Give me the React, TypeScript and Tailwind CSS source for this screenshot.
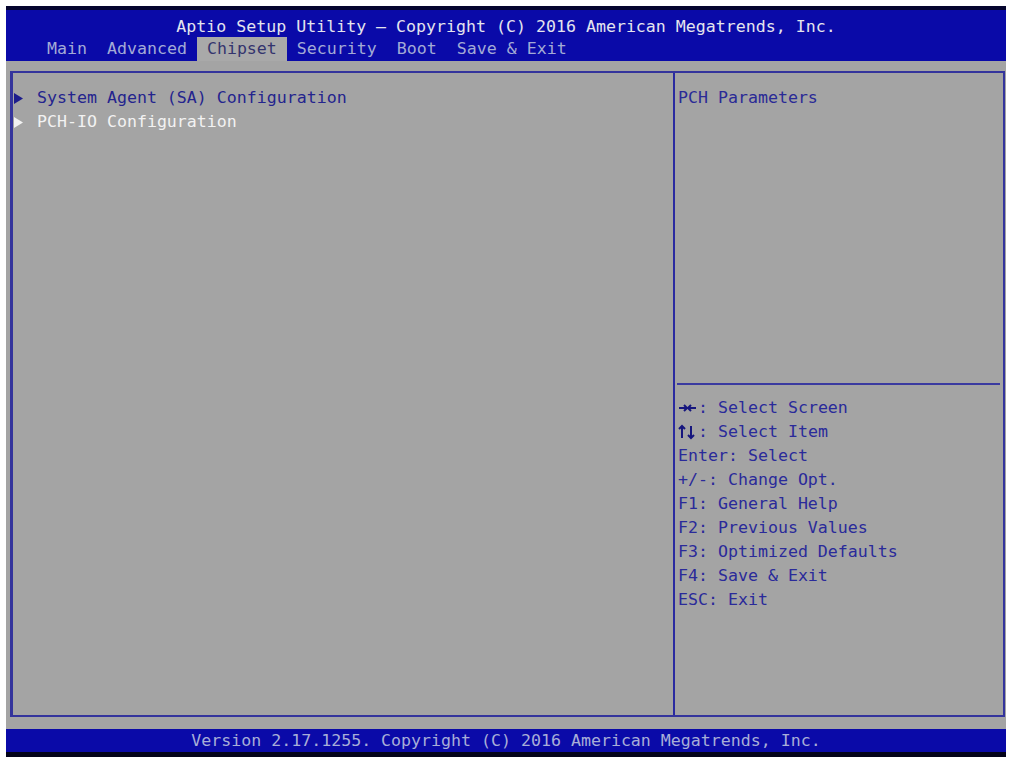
const tabs = ["Main", "Advanced", "Chipset", "Security", "Boot", "Save & Exit"];

const items = [
  { label: "System Agent (SA) Configuration", selected: false },
  { label: "PCH-IO Configuration", selected: true },
];

const help: [string, string][] = [
  ["lr", ": Select Screen"],
  ["ud", ": Select Item"],
  ["", "Enter: Select"],
  ["", "+/-: Change Opt."],
  ["", "F1: General Help"],
  ["", "F2: Previous Values"],
  ["", "F3: Optimized Defaults"],
  ["", "F4: Save & Exit"],
  ["", "ESC: Exit"],
];

function Arrow({ color }: { color: string }) {
  return (
    <svg width="9" height="11" viewBox="0 0 9 11" className="shrink-0">
      <path d="M0 0 L9 5.5 L0 11 Z" fill={color} />
    </svg>
  );
}

// the two-arrow key glyphs of the help list
function KeyArrows({ kind }: { kind: string }) {
  const c = "#16167e";
  return (
    <svg width="20" height="24" viewBox="0 0 20 24" className="inline-block align-top">
      {kind === "lr" ? (
        <g stroke={c} strokeWidth="2" fill="none">
          <path d="M1 12 H9 M6 9 L9 12 L6 15" />
          <path d="M18 12 H10 M13 9 L10 12 L13 15" />
        </g>
      ) : (
        <g stroke={c} strokeWidth="2" fill="none">
          <path d="M4 18 V6 M1 9 L4 6 L7 9" />
          <path d="M13 6 V18 M10 15 L13 18 L16 15" />
        </g>
      )}
    </svg>
  );
}

export default function App() {
  return (
    <div
      className="w-[1010px] h-[762px] bg-white pt-[6px] pl-[6px] text-[16.6px] whitespace-pre"
      style={{ fontFamily: '"DejaVu Sans Mono", "Liberation Mono", monospace' }}
    >
      <div className="w-[1000px] h-[751px] flex flex-col">
        {/* Header */}
        <div className="bg-[#0a0aa8] border-t-4 border-[#05052e]">
          <div className="h-[27px] pt-[6px] leading-[22px] text-center text-[#e4e4ee]">
            Aptio Setup Utility – Copyright (C) 2016 American Megatrends, Inc.
          </div>
          <div className="h-[24px] flex pl-[31px] leading-[24px]">
            {tabs.map((t) =>
              t === "Chipset" ? (
                <div key={t} className="px-[10px] bg-[#a9a9a9] text-[#34346e]">
                  {t}
                </div>
              ) : (
                <div key={t} className="px-[10px] text-[#a3aad6]">
                  {t}
                </div>
              )
            )}
          </div>
        </div>

        {/* Body */}
        <div className="flex-1 bg-[#a4a4a4] pt-[10px] pb-[12px] pl-[4px] pr-[1px] flex flex-col">
          <div className="flex-1 flex border-2 border-l-[3px] border-[#34349c]">
            <div className="flex-1 border-r-2 border-[#2a2aa0] pt-[13px] pl-[1px]">
              {items.map((it) => (
                <div key={it.label} className="flex items-center h-[24px] leading-[24px]">
                  <div className="w-[23px] flex items-center">
                    <Arrow color={it.selected ? "#f2f2f2" : "#1c1c8c"} />
                  </div>
                  <span className={it.selected ? "text-[#f2f2f2]" : "text-[#24248e]"}>
                    {it.label}
                  </span>
                </div>
              ))}
            </div>
            <div className="w-[328px] flex flex-col">
              <div className="h-[310px] pt-[13px] pl-[3px] leading-[24px] text-[#2a2a96]">
                PCH Parameters
              </div>
              <div className="h-[2px] bg-[#3a3aa0] ml-[2px] mr-[3px]" />
              <div className="pt-[11px] pl-[3px] leading-[24px] text-[#2a2a9a]">
                {help.map(([a, b], i) => (
                  <div key={i} className="h-[24px]">
                    {a && <KeyArrows kind={a} />}
                    {b}
                  </div>
                ))}
              </div>
            </div>
          </div>
        </div>

        {/* Footer */}
        <div className="bg-[#0a0aa8] h-[23px] leading-[23px] text-center text-[#a8aed8] border-b-[5px] border-[#03031a] box-content">
          Version 2.17.1255. Copyright (C) 2016 American Megatrends, Inc.
        </div>
      </div>
    </div>
  );
}
